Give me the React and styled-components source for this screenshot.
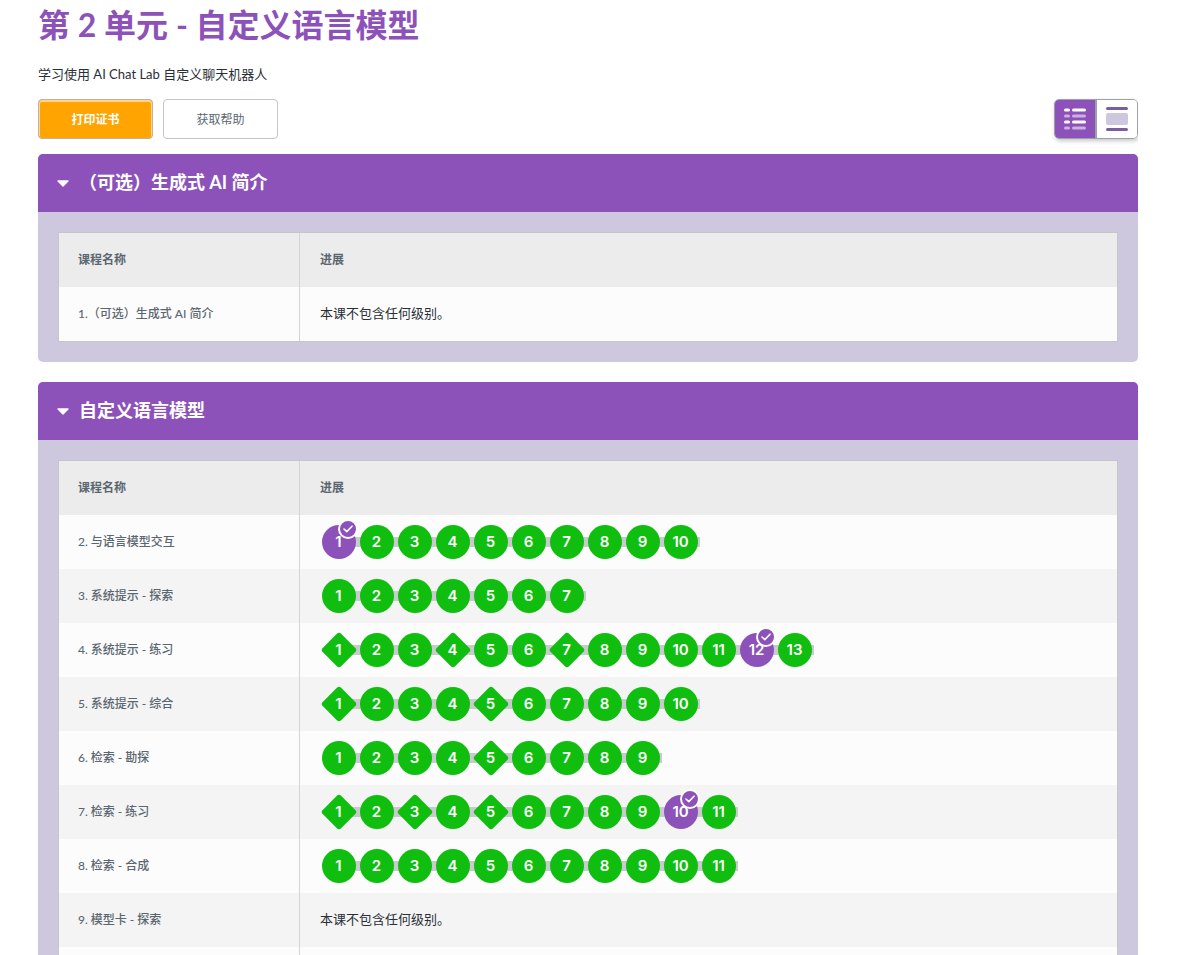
import React from "react";
import styled, { createGlobalStyle } from "styled-components";

const GlobalStyle = createGlobalStyle`
  html, body {
    margin: 0;
    padding: 0;
    background: #ffffff;
    overflow: hidden;
    font-family: "Lato", "Noto Sans CJK SC", sans-serif;
  }
`;

const purple = "#8c52ba";
const green = "#0fbe0f";

const Page = styled.div`
  width: 1100px;
  height: 955px;
  padding-left: 38px;
  overflow: hidden;
`;

const Title = styled.h1`
  margin: 0;
  height: 52px;
  line-height: 50px;
  font-size: 32px;
  font-weight: 700;
  color: ${purple};
`;

const Subtitle = styled.p`
  margin: 12px 0 0;
  height: 20px;
  line-height: 20px;
  font-size: 13px;
  color: #292f36;
`;

const Toolbar = styled.div`
  display: flex;
  align-items: stretch;
  gap: 10px;
  height: 40px;
  margin: 15px 0;
`;

const Button = styled.button`
  width: 115px;
  padding: 0 0 2px;
  border-radius: 4px;
  font-family: inherit;
  font-size: 12px;
  font-weight: ${(p) => (p.$primary ? 700 : 400)};
  color: ${(p) => (p.$primary ? "#ffffff" : "#5b6770")};
  background: ${(p) => (p.$primary ? "#ffa400" : "#ffffff")};
  border: 1px solid ${(p) => (p.$primary ? "#bdb39f" : "#c3c6c9")};
  box-shadow: ${(p) => (p.$primary ? "inset 0 1px 0 1px #ffd68a" : "none")};
`;

const ViewToggle = styled.div`
  display: flex;
  margin-left: auto;
  width: 84px;
  box-sizing: border-box;
  border: 1px solid #9aa2a8;
  border-radius: 5px;
  overflow: hidden;
  box-shadow: 1px 2px 4px rgba(0, 0, 0, 0.22);
`;

const ToggleOption = styled.div`
  flex: 1;
  display: flex;
  align-items: center;
  justify-content: center;
  background: ${(p) => (p.$active ? purple : "#ffffff")};
  border-left: ${(p) => (p.$active ? "none" : "2px solid #9aa2a8")};
`;

const Panel = styled.section`
  margin-bottom: 20px;
  border-radius: 5px;
  overflow: hidden;
  background: #cdc8de;
`;

const PanelHeader = styled.div`
  display: flex;
  align-items: center;
  gap: 10px;
  height: 58px;
  padding: 0 0 4px 19px;
  box-sizing: border-box;
  background: ${purple};
  font-size: 18px;
  font-weight: 700;
  color: #ffffff;

  svg {
    margin-top: 4px;
  }
`;

const PanelBody = styled.div`
  padding: 20px;
`;

const Table = styled.div`
  border: 1px solid #c6c6c6;
  border-bottom-width: ${(p) => (p.$open ? 0 : "1px")};
`;

const Row = styled.div`
  display: grid;
  grid-template-columns: 241px 1fr;
  height: 54px;
  background: ${(p) => (p.$head ? "#ececec" : p.$even ? "#f4f4f4" : "#fcfcfc")};
`;

const NameCell = styled.div`
  display: flex;
  align-items: center;
  padding: 0 0 4px 19px;
  font-size: 12px;
  font-weight: 500;
  color: #5b6770;
  border-right: 1px solid #d4d4d4;
`;

const HeadCell = styled(NameCell)`
  font-weight: 700;
  border-right: ${(p) => (p.$last ? "none" : "1px solid #d4d4d4")};
  padding-left: ${(p) => (p.$last ? "20px" : "19px")};
`;

const ProgressCell = styled.div`
  display: flex;
  align-items: center;
  padding-left: 20px;
  font-size: 13px;
  color: #292f36;
`;

const NoLevels = styled.span`
  margin-bottom: 4px;
`;

const Track = styled.div`
  position: relative;
  display: flex;

  &::before {
    content: "";
    position: absolute;
    left: 17px;
    right: 0;
    top: 12px;
    height: 10px;
    background: #c9cacd;
  }
`;

const Bubble = styled.div`
  position: relative;
  width: 34px;
  height: 34px;
  margin: 0 2px;
  display: flex;
  align-items: center;
  justify-content: center;
  font-family: "Inter", sans-serif;
  font-size: 15px;
  font-weight: 600;
  color: #ffffff;

  &::before {
    content: "";
    position: absolute;
    background: ${(p) => (p.$done ? purple : green)};
    inset: ${(p) => (p.$diamond ? "4px" : "0")};
    border-radius: ${(p) => (p.$diamond ? "3px" : "50%")};
    transform: ${(p) => (p.$diamond ? "rotate(45deg)" : "none")};
  }
`;

const BubbleLabel = styled.span`
  position: relative;
  margin: 0 1px 1px 0;
`;

const CheckBadge = styled.div`
  position: absolute;
  top: -6px;
  right: -2px;
  width: 20px;
  height: 20px;
  box-sizing: border-box;
  display: flex;
  align-items: center;
  justify-content: center;
  border: 2px solid #ffffff;
  border-radius: 50%;
  background: ${purple};
`;

const Caret = () => (
  <svg width="12" height="7" viewBox="0 0 12 7">
    <path d="M1 1 H11 L6 6 Z" fill="#fff" stroke="#fff" strokeWidth="1.4" strokeLinejoin="round" />
  </svg>
);

const Check = () => (
  <svg width="10" height="8" viewBox="0 0 10 8">
    <path d="M1 4 L3.8 6.6 L9 1.2" fill="none" stroke="#fff" strokeWidth="1.6" strokeLinecap="round" strokeLinejoin="round" />
  </svg>
);

const ListIcon = () => (
  <svg width="22" height="22" viewBox="0 0 22 22">
    {[0, 6, 12, 18].map((y, i) => (
      <g key={y} fill="#fff" opacity={i % 2 ? 0.55 : 1}>
        <rect x="0" y={y + 0.5} width="6" height="3" rx="1.5" />
        <rect x="8" y={y + 0.5} width="14" height="3" rx="1.5" />
      </g>
    ))}
  </svg>
);

const DetailIcon = () => (
  <svg width="22" height="24" viewBox="0 0 22 24">
    <rect x="0" y="0" width="22" height="3" rx="1.5" fill="#7a5ea0" />
    <rect x="0" y="6" width="22" height="12" rx="2" fill="#cdc8e0" />
    <rect x="0" y="21" width="22" height="3" rx="1.5" fill="#7a5ea0" />
  </svg>
);

const lessons = [
  { name: "2. 与语言模型交互", count: 10, done: [1] },
  { name: "3. 系统提示 - 探索", count: 7 },
  { name: "4. 系统提示 - 练习", count: 13, diamonds: [1, 4, 7], done: [12] },
  { name: "5. 系统提示 - 综合", count: 10, diamonds: [1, 5] },
  { name: "6. 检索 - 勘探", count: 9, diamonds: [5] },
  { name: "7. 检索 - 练习", count: 11, diamonds: [1, 3, 5], done: [10] },
  { name: "8. 检索 - 合成", count: 11 },
  { name: "9. 模型卡 - 探索", empty: true },
  { name: "" },
];

function Progress({ count, diamonds = [], done = [], empty }) {
  if (empty) return <NoLevels>本课不包含任何级别。</NoLevels>;
  if (!count) return null;
  return (
    <Track>
      {Array.from({ length: count }, (_, i) => i + 1).map((n) => (
        <Bubble key={n} $diamond={diamonds.includes(n)} $done={done.includes(n)}>
          <BubbleLabel>{n}</BubbleLabel>
          {done.includes(n) && (
            <CheckBadge>
              <Check />
            </CheckBadge>
          )}
        </Bubble>
      ))}
    </Track>
  );
}

function LessonTable({ rows, open }) {
  return (
    <Table $open={open}>
      <Row $head>
        <HeadCell>课程名称</HeadCell>
        <HeadCell $last>进展</HeadCell>
      </Row>
      {rows.map((row, i) => (
        <Row key={i} $even={i % 2 === 1}>
          <NameCell>{row.name}</NameCell>
          <ProgressCell>
            <Progress {...row} />
          </ProgressCell>
        </Row>
      ))}
    </Table>
  );
}

export default function App() {
  return (
    <>
      <GlobalStyle />
      <Page>
        <Title>第 2 单元 - 自定义语言模型</Title>
        <Subtitle>学习使用 AI Chat Lab 自定义聊天机器人</Subtitle>
        <Toolbar>
          <Button $primary>打印证书</Button>
          <Button>获取帮助</Button>
          <ViewToggle>
            <ToggleOption $active>
              <ListIcon />
            </ToggleOption>
            <ToggleOption>
              <DetailIcon />
            </ToggleOption>
          </ViewToggle>
        </Toolbar>
        <Panel>
          <PanelHeader>
            <Caret />
            （可选）生成式 AI 简介
          </PanelHeader>
          <PanelBody>
            <LessonTable rows={[{ name: "1.（可选）生成式 AI 简介", empty: true }]} />
          </PanelBody>
        </Panel>
        <Panel>
          <PanelHeader>
            <Caret />
            自定义语言模型
          </PanelHeader>
          <PanelBody>
            <LessonTable rows={lessons} open />
          </PanelBody>
        </Panel>
      </Page>
    </>
  );
}
